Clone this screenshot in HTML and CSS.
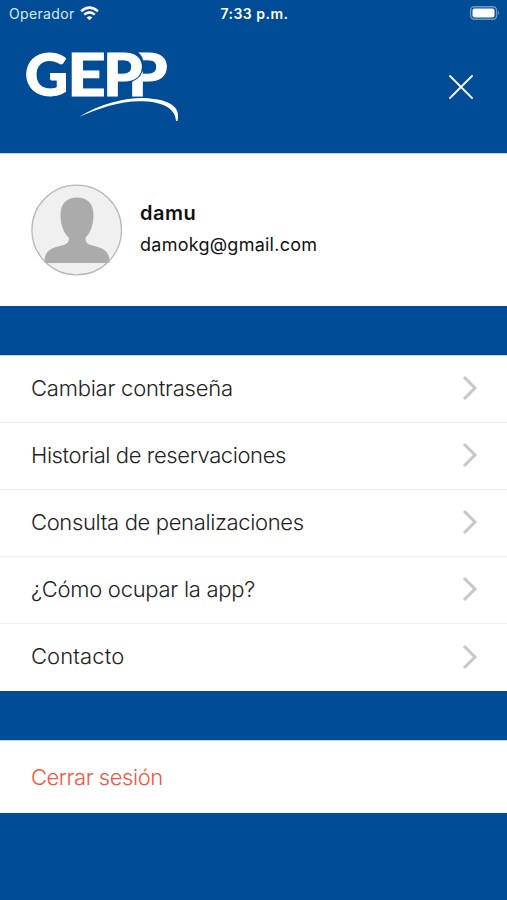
FILE: index.html
```html
<!DOCTYPE html>
<html lang="es">
<head>
<meta charset="utf-8">
<meta name="viewport" content="width=device-width">
<title>GEPP</title>
<link rel="stylesheet" href="styles.css">
</head>
<body>
<div class="status">
  <div class="carrier"><span class="operator">Operador</span>
    <svg class="wifi" width="19" height="15" viewBox="0 0 19 15" fill="none" stroke="#fff" stroke-width="2.5"><path d="M1.1 5.2Q9.5-2 17.9 5.2M4.2 8.6Q9.5 4.2 14.8 8.6"/><path d="M6.7 11.4Q9.5 9 12.3 11.4L9.5 14.2Z" fill="#fff" stroke="none"/></svg>
  </div>
  <time class="clock">7:33 p.m.</time>
  <svg class="battery" width="32" height="16" viewBox="0 0 32 16"><rect x="2.6" y="1.8" width="26" height="12.4" rx="3.6" fill="none" stroke="#6e98c4" stroke-width="1.4"/><rect x="4.5" y="3.6" width="22" height="8.8" rx="2" fill="#fff"/><path d="M30 5.8Q32 8 30 10.2Z" fill="#6e98c4"/></svg>
</div>
<header class="header">
  <svg class="logo" width="156" height="74" viewBox="25 49 156 74" role="img" aria-label="GEPP">
    <defs><clipPath id="behind"><path d="M138 48H170V98H131V82.500Q143.500 77 143.800 66Q143.500 56 138 52Z"/></clipPath></defs>
    <g class="wordmark">
      <text x="24.8" y="95.700" textLength="43.500" lengthAdjust="spacingAndGlyphs">G</text>
      <text x="67.2" y="95.700" textLength="38.500" lengthAdjust="spacingAndGlyphs">E</text>
      <text clip-path="url(#behind)" x="128" y="95.700" textLength="39.500" lengthAdjust="spacingAndGlyphs">P</text>
      <text x="103" y="95.700" textLength="39.500" lengthAdjust="spacingAndGlyphs">P</text>
    </g>
    <path d="M79 117C103 102 130 97 148 98.3C170 100 181 107 177.5 121H176C175.5 110 166 103 147 101.5C124 99.5 102 107 79 117Z" fill="#fff"/>
  </svg>
  <svg class="close" width="26" height="26" viewBox="0 0 26 26" fill="none" stroke="#fff" stroke-width="1.8" stroke-linecap="round"><path d="M2 2L24 24M24 2L2 24"/></svg>
</header>
<section class="profile">
  <svg width="92" height="92" viewBox="0 0 92 92"><circle cx="45.700" cy="46" r="44.8" fill="#f0f0f0"/><path d="M46 13.5C57 13.5 62.5 20 62.5 31C62.5 43 58 50 54.5 54C54.5 61 59 60.5 67 63C75 65.5 79 70 78.5 79H13.5C13 70 17 65.500 25 63C33 60.500 38 61 38 54C34 50 29.500 43 29.500 31C29.500 20 35 13.500 46 13.500Z" fill="#ababab"/><circle cx="45.700" cy="46" r="44.8" fill="none" stroke="#b8b8b8" stroke-width="1.300"/></svg>
  <div class="identity"><strong class="name">damu</strong><span class="email">damokg@gmail.com</span></div>
</section>
<nav class="menu">
  <a class="row"><span class="label password">Cambiar contraseña</span><svg class="chevron" viewBox="0 0 16 26"><path d="M2 2L13 13L2 24"/></svg></a>
  <a class="row"><span class="label history">Historial de reservaciones</span><svg class="chevron" viewBox="0 0 16 26"><path d="M2 2L13 13L2 24"/></svg></a>
  <a class="row"><span class="label penalties">Consulta de penalizaciones</span><svg class="chevron" viewBox="0 0 16 26"><path d="M2 2L13 13L2 24"/></svg></a>
  <a class="row"><span class="label help">¿Cómo ocupar la app?</span><svg class="chevron" viewBox="0 0 16 26"><path d="M2 2L13 13L2 24"/></svg></a>
  <a class="row"><span class="label contact">Contacto</span><svg class="chevron" viewBox="0 0 16 26"><path d="M2 2L13 13L2 24"/></svg></a>
</nav>
<a class="logout"><span class="label">Cerrar sesión</span></a>
</body>
</html>
```
FILE: styles.css
```css
* { box-sizing: border-box; }
body { margin: 0; min-height: 900px; background: #004c97; font-family: Inter, "Liberation Sans", sans-serif; color: #222; }
.status { display: grid; grid-template-columns: 1fr auto 1fr; align-items: center; height: 28px; padding: 0 7px 2px 9px; color: #fff; font-size: 14px; }
.carrier { display: flex; align-items: center; gap: 5px; color: #dce8f3; letter-spacing: .35px; }
.clock { font-weight: 600; font-size: 14px; letter-spacing: .5px; }
.battery { justify-self: end; }
.header { display: flex; justify-content: space-between; align-items: flex-start; height: 125px; padding: 21px 33px 0 25px; }
.close { margin-top: 25px; }
.logo { overflow: visible; }
.wordmark { font-family: Lato, sans-serif; font-weight: 900; font-size: 59px; fill: #fff; stroke: #fff; stroke-width: 1px; }
.profile { display: flex; align-items: center; gap: 17px; height: 153px; padding: 0 31px; background: #fff; border-top: 1px solid #bdd5ee; }
.identity { display: flex; flex-direction: column; gap: 6px; padding-bottom: 2px; color: #111; }
.name { font-size: 20px; font-weight: 600; line-height: 26px; letter-spacing: .5px; }
.email { font-size: 18px; line-height: 26px; letter-spacing: .25px; }
.menu { margin-top: 49px; background: #fff; border-top: 1px solid #bdd5ee; }
.row { display: flex; align-items: center; justify-content: space-between; height: 67.1px; padding: 0 29px 2px 31px; border-bottom: 1px solid #eee; font-size: 22px; font-weight: 300; }
.row:last-child { border-bottom: 0; padding-bottom: 2px; }
.label { padding-bottom: 1px; }
.password { letter-spacing: -.22px; }
.history { letter-spacing: -.4px; }
.penalties { letter-spacing: -.35px; }
.help { letter-spacing: -.27px; }
.contact { letter-spacing: .1px; }
.chevron { width: 16px; height: 26px; fill: none; stroke: #c7c7c7; stroke-width: 3; }
.logout { display: flex; align-items: center; margin-top: 49px; height: 73px; padding: 0 31px; background: #fff; border-top: 1px solid #bdd5ee; color: #f2553e; font-size: 22px; font-weight: 300; letter-spacing: -.45px; }
```
